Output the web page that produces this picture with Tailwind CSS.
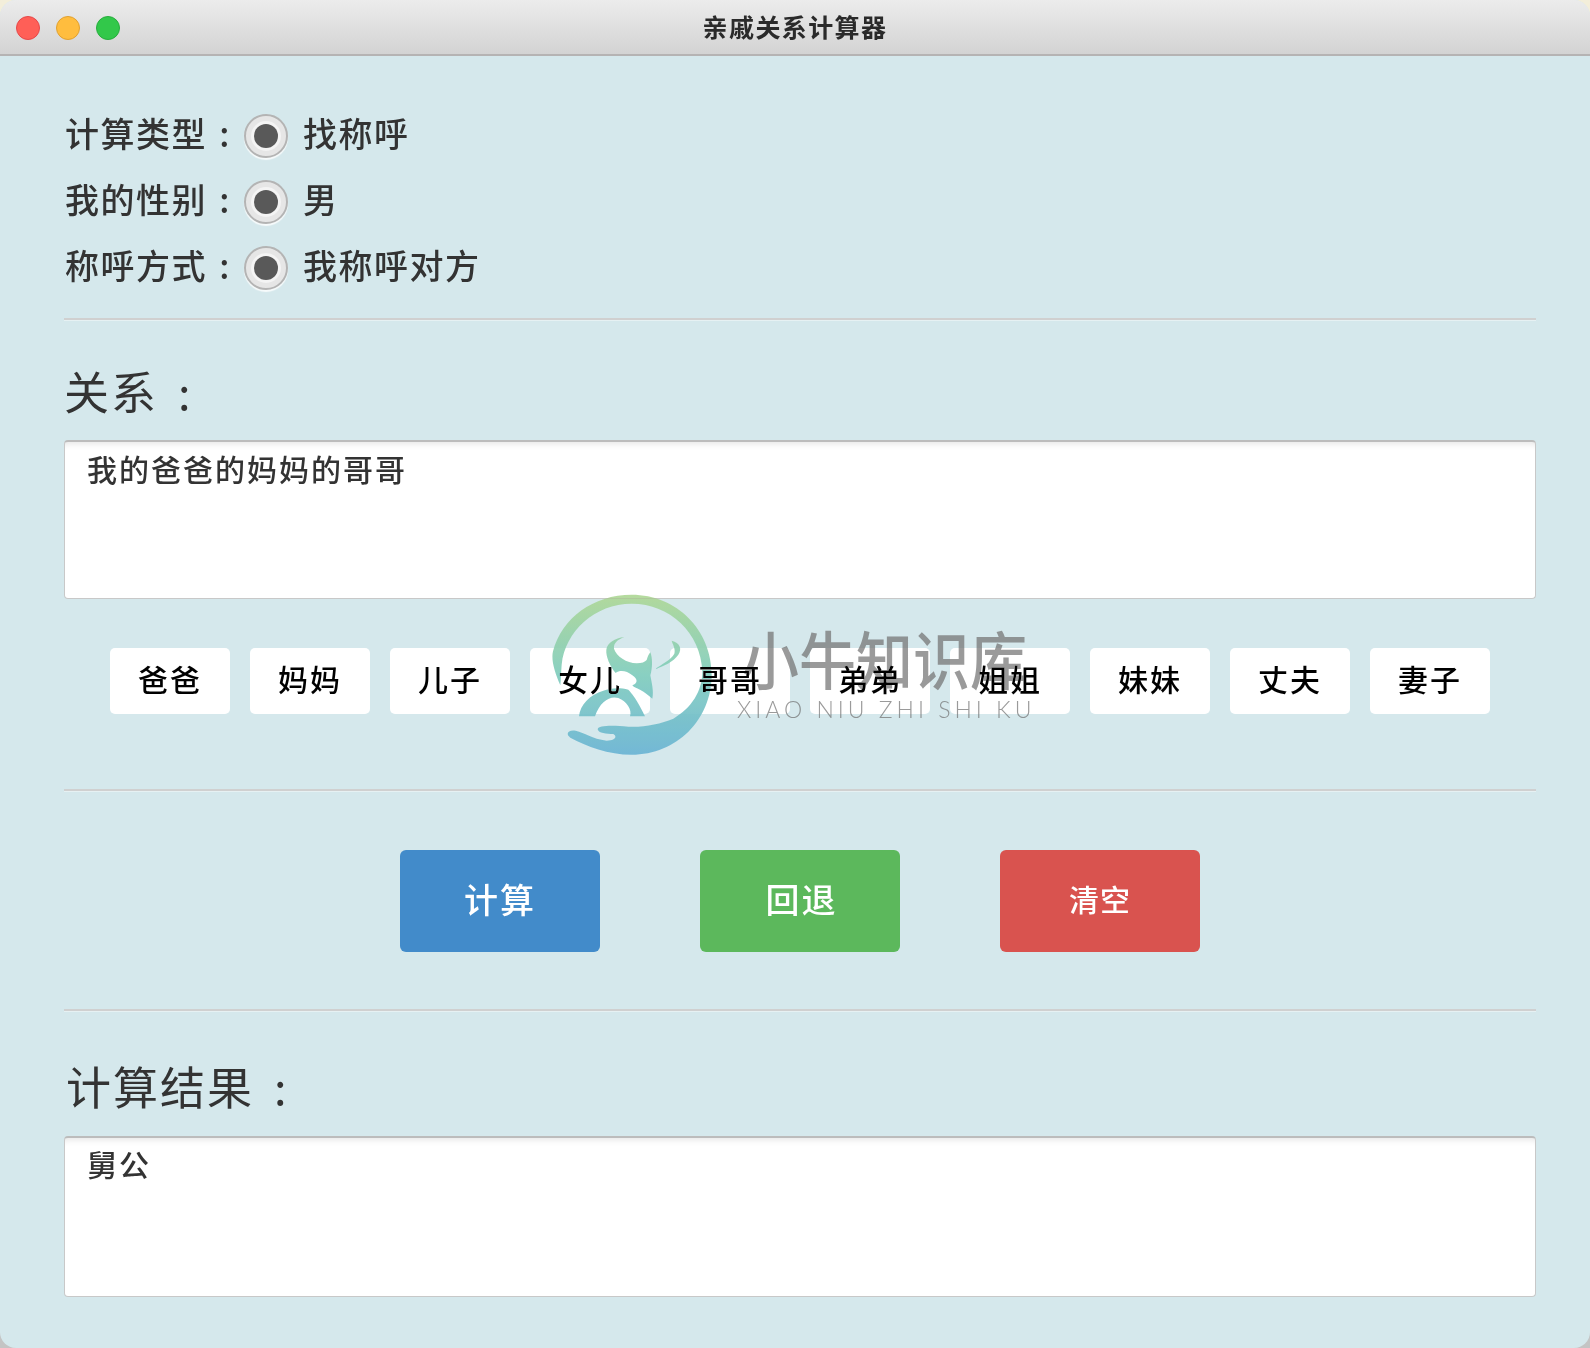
<!DOCTYPE html>
<html lang="zh-CN">
<head>
  <meta charset="UTF-8" />
  <title>亲戚关系计算器</title>
  <script src="https://cdn.jsdelivr.net/npm/@tailwindcss/browser@4"></script>
</head>
<body class="h-[1348px] overflow-hidden bg-gradient-to-b from-[#f3eeda] from-50% to-[#c4c4c4] to-50% font-['Noto_Sans_CJK_SC','Liberation_Sans',sans-serif] font-medium text-[#333]">
  <div class="relative flex h-[1348px] flex-col overflow-hidden rounded-[16px] bg-[#d5e8ec]">

    <!-- title bar -->
    <div class="relative flex h-[56px] shrink-0 items-center justify-center border-b-2 border-[#b5b3b3] bg-gradient-to-b from-[#ececec] to-[#d3d3d3]">
      <div class="absolute left-4 top-4 flex gap-4">
        <span class="size-6 rounded-full border border-[#e5484a] bg-[#ff5f57]"></span>
        <span class="size-6 rounded-full border border-[#e0a030] bg-[#ffbd3e]"></span>
        <span class="size-6 rounded-full border border-[#27ad3d] bg-[#32c84a]"></span>
      </div>
      <span class="pb-[2px] text-[25px] leading-none font-semibold tracking-[1.4px] text-[#2a2a2a]">亲戚关系计算器</span>
    </div>

    <div class="flex flex-col pl-[64px] pr-[54px] pt-[47px]">
      <!-- options -->
      <div class="flex h-[66px] items-center">
        <span class="w-[180px] pb-[6px] pl-px text-[34px] leading-none tracking-[1.5px] [word-spacing:3px]">计算类型 :</span>
        <span class="flex size-[44px] items-center justify-center rounded-full border-2 border-[#b4b4b4] bg-[#e6e6e6] shadow-[0_2px_1px_rgba(255,255,255,0.8)]"><span class="size-[24px] rounded-full bg-[#595959] shadow-[0_0_0_3px_#f4f4f4]"></span></span>
        <span class="ml-[15px] pb-[6px] text-[34px] leading-none tracking-[1.5px]">找称呼</span>
      </div>
      <div class="flex h-[66px] items-center">
        <span class="w-[180px] pb-[6px] pl-px text-[34px] leading-none tracking-[1.5px] [word-spacing:3px]">我的性别 :</span>
        <span class="flex size-[44px] items-center justify-center rounded-full border-2 border-[#b4b4b4] bg-[#e6e6e6] shadow-[0_2px_1px_rgba(255,255,255,0.8)]"><span class="size-[24px] rounded-full bg-[#595959] shadow-[0_0_0_3px_#f4f4f4]"></span></span>
        <span class="ml-[15px] pb-[6px] text-[34px] leading-none tracking-[1.5px]">男</span>
      </div>
      <div class="flex h-[66px] items-center">
        <span class="w-[180px] pb-[6px] pl-px text-[34px] leading-none tracking-[1.5px] [word-spacing:3px]">称呼方式 :</span>
        <span class="flex size-[44px] items-center justify-center rounded-full border-2 border-[#b4b4b4] bg-[#e6e6e6] shadow-[0_2px_1px_rgba(255,255,255,0.8)]"><span class="size-[24px] rounded-full bg-[#595959] shadow-[0_0_0_3px_#f4f4f4]"></span></span>
        <span class="ml-[15px] pb-[6px] text-[34px] leading-none tracking-[1.5px]">我称呼对方</span>
      </div>

      <div class="mt-[17px] h-[3px] border-b border-[#e6f1f3] bg-[#d0d0d0]"></div>

      <!-- relation input -->
      <div class="mt-[48px] mb-[27px] h-[44px] text-[45px] leading-[44px] font-normal tracking-[2px] [word-spacing:8px]">关系 :</div>
      <div class="h-[159px] rounded-[4px] border border-[#c8c8c8] border-t-2 border-t-[#bcbcbc] bg-white pl-[22px] pt-[9px] text-[30px] leading-[34px] tracking-[2px] shadow-[inset_0_8px_6px_-6px_rgba(0,0,0,0.1)]">我的爸爸的妈妈的哥哥</div>

      <!-- quick keys -->
      <div class="mt-[49px] flex justify-center gap-5 text-[30px] leading-none tracking-[2px] text-black">
        <button class="h-[66px] w-[120px] rounded-[5px] bg-white pb-[6px]">爸爸</button>
        <button class="h-[66px] w-[120px] rounded-[5px] bg-white pb-[6px]">妈妈</button>
        <button class="h-[66px] w-[120px] rounded-[5px] bg-white pb-[6px]">儿子</button>
        <button class="h-[66px] w-[120px] rounded-[5px] bg-white pb-[6px]">女儿</button>
        <button class="h-[66px] w-[120px] rounded-[5px] bg-white pb-[6px]">哥哥</button>
        <button class="h-[66px] w-[120px] rounded-[5px] bg-white pb-[6px]">弟弟</button>
        <button class="h-[66px] w-[120px] rounded-[5px] bg-white pb-[6px]">姐姐</button>
        <button class="h-[66px] w-[120px] rounded-[5px] bg-white pb-[6px]">妹妹</button>
        <button class="h-[66px] w-[120px] rounded-[5px] bg-white pb-[6px]">丈夫</button>
        <button class="h-[66px] w-[120px] rounded-[5px] bg-white pb-[6px]">妻子</button>
      </div>

      <div class="mt-[75px] h-[3px] border-b border-[#e6f1f3] bg-[#d0d0d0]"></div>

      <!-- actions -->
      <div class="mt-[58px] flex justify-center gap-[100px] leading-none text-white">
        <button class="h-[102px] w-[200px] rounded-[6px] bg-[#428bca] pb-[4px] text-[34px] tracking-[2px]">计算</button>
        <button class="h-[102px] w-[200px] rounded-[6px] bg-[#5cb85c] pb-[4px] pl-[3px] text-[34px] tracking-[2px]">回退</button>
        <button class="h-[102px] w-[200px] rounded-[6px] bg-[#d9534f] pb-[6px] text-[30px] tracking-[1px]">清空</button>
      </div>

      <div class="mt-[57px] h-[3px] border-b border-[#e6f1f3] bg-[#d0d0d0]"></div>

      <!-- result -->
      <div class="mt-[52px] mb-[28px] h-[44px] pl-[2px] text-[45px] leading-[44px] font-normal tracking-[2px] [word-spacing:8px]">计算结果 :</div>
      <div class="h-[161px] rounded-[4px] border border-[#c8c8c8] border-t-2 border-t-[#bcbcbc] bg-white pl-[22px] pt-[8px] text-[30px] leading-[34px] tracking-[2px] shadow-[inset_0_8px_6px_-6px_rgba(0,0,0,0.1)]">舅公</div>
    </div>

    <!-- watermark -->
    <div class="pointer-events-none absolute left-[545px] top-[588px] h-[175px] w-[500px]">
      <svg class="absolute left-0 top-0 mix-blend-darken" width="175" height="175" viewBox="0 0 525 525" opacity="0.9">
        <defs>
          <linearGradient id="wm" gradientUnits="userSpaceOnUse" x1="0" y1="20" x2="0" y2="500">
            <stop offset="0" stop-color="#aed794" />
            <stop offset="0.5" stop-color="#7ccbbb" />
            <stop offset="1" stop-color="#68b3d4" />
          </linearGradient>
        </defs>
        <g fill="url(#wm)">
          <!-- ring and hand -->
          <path d="M46 292 C28 250 18 215 24 190 C50 90 145 20 260 20 C395 20 500 125 500 260 C500 395 395 500 260 500 C190 500 125 475 76 449 C60 438 70 424 92 428 C120 434 140 452 185 458 C210 458 218 446 205 438 C185 438 160 436 158 424 C160 412 200 412 250 416 C300 418 345 408 385 392 C440 360 472 310 472 250 C468 135 375 47 260 47 C150 47 60 130 50 230 C48 255 48 275 46 292 Z" />
          <!-- bull head and horn -->
          <path d="M238 147 C218 155 205 165 207 182 C214 205 245 225 275 226 C290 226 300 222 305 216 C308 207 310 200 316 193 C323 210 323 240 316 262 C320 285 327 310 322 332 C310 322 300 312 285 305 C275 300 265 298 262 292 C278 286 280 275 262 262 C245 248 225 245 212 255 C195 235 182 205 184 185 C186 165 210 150 238 147 Z" />
          <!-- bull body -->
          <path d="M102 385 C105 350 135 320 175 308 C195 300 225 298 250 305 C262 318 270 328 282 350 C290 365 296 375 300 385 L255 385 C262 365 245 340 220 330 C195 322 165 340 150 385 Z" />
          <!-- tail -->
          <path d="M380 158 C405 165 412 182 400 200 C385 222 355 235 330 243 C352 228 378 215 388 197 C392 182 384 172 380 158 Z" />
        </g>
      </svg>
      <div class="absolute left-[197px] top-[38px] origin-top scale-y-110 text-[57px] leading-none font-medium whitespace-nowrap text-[#6f6f6f]/70 mix-blend-darken">小牛知识库</div>
      <div class="absolute left-[192px] top-[110px] font-['Lato',sans-serif] text-[23px] leading-none font-light tracking-[4px] whitespace-nowrap text-[#6f6f6f]/70 mix-blend-darken">XIAO NIU ZHI SHI KU</div>
    </div>
  </div>
</body>
</html>
